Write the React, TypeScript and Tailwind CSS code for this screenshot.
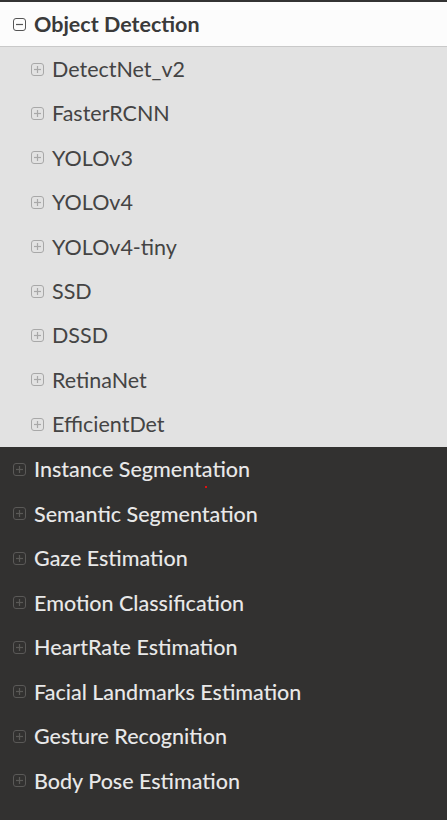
import React from "react";

const subModels = [
  "DetectNet_v2",
  "FasterRCNN",
  "YOLOv3",
  "YOLOv4",
  "YOLOv4-tiny",
  "SSD",
  "DSSD",
  "RetinaNet",
  "EfficientDet",
];

const tasks = [
  "Instance Segmentation",
  "Semantic Segmentation",
  "Gaze Estimation",
  "Emotion Classification",
  "HeartRate Estimation",
  "Facial Landmarks Estimation",
  "Gesture Recognition",
  "Body Pose Estimation",
];

function BoxIcon({ minus, color }: { minus?: boolean; color: string }) {
  return (
    <svg width="13" height="13" viewBox="0 0 13 13" className="shrink-0">
      <rect x="0.5" y="0.5" width="12" height="12" rx="2.5" fill="none" stroke={color} strokeWidth="1" />
      <line x1="3" y1="6.5" x2="10" y2="6.5" stroke={color} strokeWidth="1.2" />
      {!minus && <line x1="6.5" y1="3" x2="6.5" y2="10" stroke={color} strokeWidth="1.2" />}
    </svg>
  );
}

export default function App() {
  return (
    <div className="relative w-[447px] h-[820px] bg-[#323130] font-['Lato','Noto_Sans',sans-serif] overflow-hidden">
      <div className="border-t-[2px] border-[#333] bg-[#fcfcfc] h-[47px] flex items-center gap-[8px] pl-[13px] border-b border-b-[#c9c9c9]">
        <BoxIcon minus color="#555" />
        <span className="text-[21.5px] font-bold text-[#3a3a3a]">Object Detection</span>
      </div>
      <div className="bg-[#e2e2e2] h-[400px] flex flex-col">
        {subModels.map((m) => (
          <div key={m} className="h-[44.4px] flex items-center gap-[8px] pl-[31px]">
            <BoxIcon color="#a8a8a8" />
            <span className="text-[21.5px] text-[#444]">{m}</span>
          </div>
        ))}
      </div>
      <div className="flex flex-col">
        {tasks.map((t) => (
          <div key={t} className="h-[44.5px] flex items-center gap-[8px] pl-[13px]">
            <BoxIcon color="#5a5957" />
            <span className="text-[21.5px] font-medium text-[#e8e8e8]">{t}</span>
          </div>
        ))}
      </div>
      <div className="absolute left-[205px] top-[486px] w-[2px] h-[2px] bg-[#e01010]" />
    </div>
  );
}
